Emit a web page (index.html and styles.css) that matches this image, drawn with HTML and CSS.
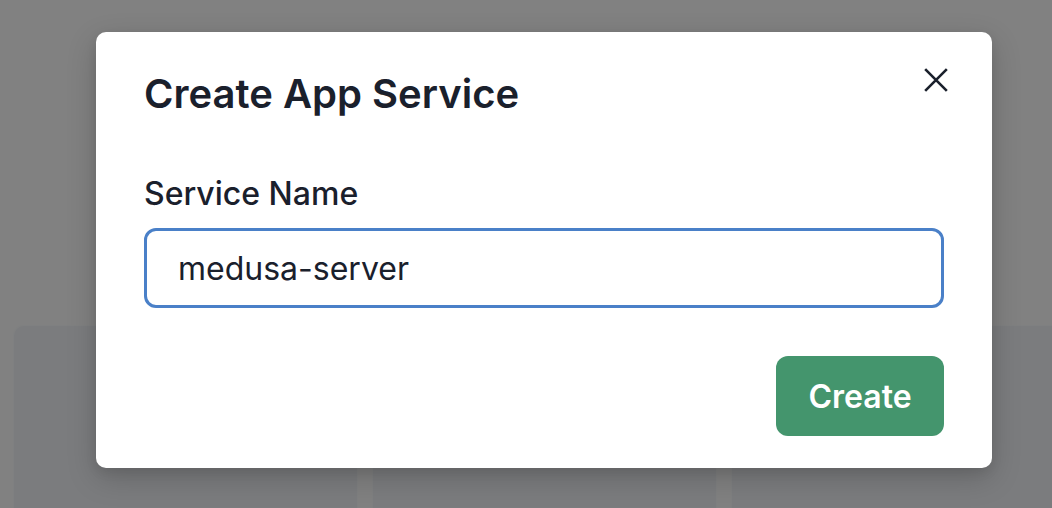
FILE: index.html
```html
<!DOCTYPE html>
<html lang="en">
<head>
<meta charset="utf-8">
<title>Create App Service</title>
<link rel="stylesheet" href="styles.css">
</head>
<body>
<div class="page">
  <div class="cards">
    <div class="card"></div>
    <div class="card"></div>
    <div class="card"></div>
  </div>
</div>
<div class="overlay">
  <div class="modal">
    <header class="modal-header">
      <h2 class="modal-title">Create App Service</h2>
    </header>
    <button class="close" aria-label="Close">
      <svg viewBox="0 0 24 24" width="26" height="26" aria-hidden="true">
        <path d="M2 2 L22 22 M22 2 L2 22" stroke="#1a202c" stroke-width="2.4" stroke-linecap="butt" fill="none"/>
      </svg>
    </button>
    <div class="modal-body">
      <label class="label" for="svc">Service Name</label>
      <div class="input">medusa-server</div>
    </div>
    <footer class="modal-footer">
      <button class="btn">Create</button>
    </footer>
  </div>
</div>
</body>
</html>
```
FILE: styles.css
```css
html, body {
  margin: 0;
  padding: 0;
  width: 1052px;
  height: 508px;
  overflow: hidden;
  font-family: Inter, "Noto Sans", sans-serif;
}
body {
  background: #818181;
  position: relative;
}
.page {
  padding-top: 326px;
  padding-left: 14px;
}
.cards {
  display: grid;
  grid-template-columns: 343px 343px 343px;
  gap: 16px;
}
.card {
  height: 200px;
  background: #7b7c7e;
  border-radius: 10px;
  box-shadow: 0 0 0 1px #7f8081;
}
.overlay {
  position: absolute;
  inset: 0;
  padding: 32px 0 0 96px;
}
.modal {
  position: relative;
  width: 896px;
  background: #ffffff;
  border-radius: 10px;
  box-shadow: 0 10px 30px rgba(0, 0, 0, 0.18), 0 4px 12px rgba(0, 0, 0, 0.08);
}
.modal-header {
  padding: 32px 48px;
}
.modal-title {
  margin: 0;
  font-size: 40px;
  line-height: 60px;
  font-weight: 600;
  color: #1a202c;
  letter-spacing: 0;
}
.close {
  position: absolute;
  top: 16px;
  right: 24px;
  width: 64px;
  height: 64px;
  border: 0;
  background: transparent;
  padding: 0;
  display: flex;
  align-items: center;
  justify-content: center;
  cursor: pointer;
}
.modal-body {
  padding: 16px 48px;
}
.label {
  display: block;
  font-size: 32px;
  line-height: 44px;
  font-weight: 500;
  color: #1a202c;
  margin-bottom: 12px;
}
.input {
  box-sizing: border-box;
  height: 80px;
  border: 3px solid #4a80c8;
  border-radius: 12px;
  padding: 0 31px;
  display: flex;
  align-items: center;
  font-size: 32px;
  color: #1a202c;
}
.modal-footer {
  padding: 32px 48px;
  display: flex;
  justify-content: flex-end;
}
.btn {
  width: 168px;
  height: 80px;
  border: 0;
  border-radius: 12px;
  background: #44956d;
  color: #ffffff;
  font-family: Inter, "Noto Sans", sans-serif;
  font-size: 32px;
  font-weight: 600;
  cursor: pointer;
}
```
